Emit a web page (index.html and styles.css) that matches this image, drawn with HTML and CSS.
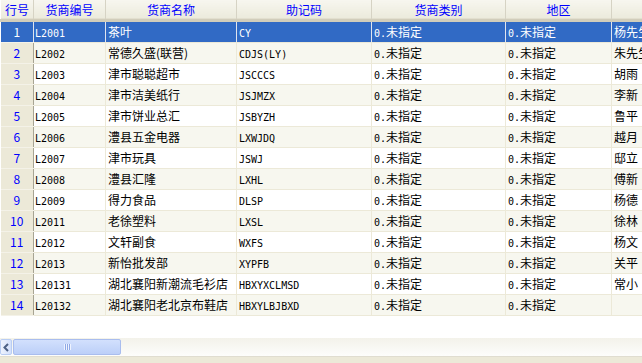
FILE: index.html
```html
<!DOCTYPE html>
<html>
<head>
<meta charset="utf-8">
<link rel="stylesheet" href="styles.css">
</head>
<body>
<div class="app">
  <div class="grid-wrap">
    <table class="grid">
      <colgroup>
        <col class="c-no"><col class="c-code"><col class="c-name"><col class="c-mn"><col class="c-cat"><col class="c-reg"><col class="c-last">
      </colgroup>
      <thead>
        <tr><th>行号</th><th>货商编号</th><th>货商名称</th><th>助记码</th><th>货商类别</th><th>地区</th><th>联系人</th></tr>
      </thead>
      <tbody>
        <tr class="sel"><td class="no">1</td><td class="code"><span class="m">L2001</span></td><td>茶叶</td><td><span class="m">CY</span></td><td><span class="m">0.</span>未指定</td><td><span class="m">0.</span>未指定</td><td>杨先生</td></tr>
        <tr class="alt"><td class="no">2</td><td class="code"><span class="m">L2002</span></td><td>常德久盛(联营)</td><td><span class="m">CDJS(LY)</span></td><td><span class="m">0.</span>未指定</td><td><span class="m">0.</span>未指定</td><td>朱先生</td></tr>
        <tr><td class="no">3</td><td class="code"><span class="m">L2003</span></td><td>津市聪聪超市</td><td><span class="m">JSCCCS</span></td><td><span class="m">0.</span>未指定</td><td><span class="m">0.</span>未指定</td><td>胡雨</td></tr>
        <tr class="alt"><td class="no">4</td><td class="code"><span class="m">L2004</span></td><td>津市洁美纸行</td><td><span class="m">JSJMZX</span></td><td><span class="m">0.</span>未指定</td><td><span class="m">0.</span>未指定</td><td>李新</td></tr>
        <tr><td class="no">5</td><td class="code"><span class="m">L2005</span></td><td>津市饼业总汇</td><td><span class="m">JSBYZH</span></td><td><span class="m">0.</span>未指定</td><td><span class="m">0.</span>未指定</td><td>鲁平</td></tr>
        <tr class="alt"><td class="no">6</td><td class="code"><span class="m">L2006</span></td><td>澧县五金电器</td><td><span class="m">LXWJDQ</span></td><td><span class="m">0.</span>未指定</td><td><span class="m">0.</span>未指定</td><td>越月</td></tr>
        <tr><td class="no">7</td><td class="code"><span class="m">L2007</span></td><td>津市玩具</td><td><span class="m">JSWJ</span></td><td><span class="m">0.</span>未指定</td><td><span class="m">0.</span>未指定</td><td>邸立</td></tr>
        <tr class="alt"><td class="no">8</td><td class="code"><span class="m">L2008</span></td><td>澧县汇隆</td><td><span class="m">LXHL</span></td><td><span class="m">0.</span>未指定</td><td><span class="m">0.</span>未指定</td><td>傅新</td></tr>
        <tr><td class="no">9</td><td class="code"><span class="m">L2009</span></td><td>得力食品</td><td><span class="m">DLSP</span></td><td><span class="m">0.</span>未指定</td><td><span class="m">0.</span>未指定</td><td>杨德</td></tr>
        <tr class="alt"><td class="no">10</td><td class="code"><span class="m">L2011</span></td><td>老徐塑料</td><td><span class="m">LXSL</span></td><td><span class="m">0.</span>未指定</td><td><span class="m">0.</span>未指定</td><td>徐林</td></tr>
        <tr><td class="no">11</td><td class="code"><span class="m">L2012</span></td><td>文轩副食</td><td><span class="m">WXFS</span></td><td><span class="m">0.</span>未指定</td><td><span class="m">0.</span>未指定</td><td>杨文</td></tr>
        <tr class="alt"><td class="no">12</td><td class="code"><span class="m">L2013</span></td><td>新怡批发部</td><td><span class="m">XYPFB</span></td><td><span class="m">0.</span>未指定</td><td><span class="m">0.</span>未指定</td><td>关平</td></tr>
        <tr><td class="no">13</td><td class="code"><span class="m">L20131</span></td><td>湖北襄阳新潮流毛衫店</td><td><span class="m">HBXYXCLMSD</span></td><td><span class="m">0.</span>未指定</td><td><span class="m">0.</span>未指定</td><td>常小</td></tr>
        <tr class="alt"><td class="no">14</td><td class="code"><span class="m">L20132</span></td><td>湖北襄阳老北京布鞋店</td><td><span class="m">HBXYLBJBXD</span></td><td><span class="m">0.</span>未指定</td><td><span class="m">0.</span>未指定</td><td></td></tr>
      </tbody>
    </table>
  </div>
  <div class="hscroll">
    <div class="sb-btn">
      <svg width="8" height="9" viewBox="0 0 8 9"><path d="M6 1 L2.5 4.5 L6 8" fill="none" stroke="#4d6185" stroke-width="2"/></svg>
    </div>
    <div class="sb-thumb"><span class="grip"></span></div>
    <div class="sb-track"></div>
  </div>
  <div class="status"></div>
</div>
</body>
</html>
```

FILE: styles.css
```css
html, body {
  margin: 0;
  padding: 0;
  background: #ffffff;
}
.app {
  width: 642px;
  height: 363px;
  display: flex;
  flex-direction: column;
  overflow: hidden;
  font-family: "Noto Sans CJK SC", "Liberation Sans", sans-serif;
  font-size: 12px;
}
.grid-wrap {
  flex: 1;
  overflow: hidden;
  background: #ffffff;
}
.grid {
  table-layout: fixed;
  border-collapse: collapse;
  width: 771px;
}
.c-no { width: 33px; }
.c-code { width: 72px; }
.c-name { width: 131px; }
.c-mn { width: 135px; }
.c-cat { width: 134px; }
.c-reg { width: 106px; }
.c-last { width: 160px; }

.grid th {
  height: 19px;
  padding: 0;
  font-weight: normal;
  color: #0000ff;
  text-align: center;
  white-space: nowrap;
  overflow: hidden;
  line-height: 19px;
  background: linear-gradient(#f7f6ef, #ebeadb);
  border-left: 1px solid #ffffff;
  border-right: 1px solid #d6d3c4;
  border-bottom: 3px solid #d1cdbb;
  box-shadow: inset 0 -1px 0 #e2dfcf;
}
.grid td {
  height: 20px;
  padding: 0 0 0 2px;
  line-height: 20px;
  white-space: nowrap;
  overflow: hidden;
  color: #000000;
  border-right: 1px solid #ece9d8;
  border-bottom: 1px solid #ece9d8;
  background: #ffffff;
}
.grid tr.alt td {
  background: #f7f7ef;
}
.grid td.no {
  padding: 0;
  text-align: center;
  color: #0000ff;
  background: #ece9d8;
  border-right: 1px solid #a7a493;
  border-bottom: 1px solid #f4f2e8;
}
.grid tr.alt td.no {
  background: #ece9d8;
}
.grid td.code {
  padding-left: 1px;
}
.grid tr.sel td,
.grid tr.sel td.no {
  background: #316ac5;
  color: #ffffff;
  border-right-color: #dfe4ee;
}
.m {
  font-family: "DejaVu Sans Mono", "Liberation Mono", monospace;
  font-size: 10px;
  line-height: 1;
}

.hscroll {
  height: 18px;
  display: flex;
  align-items: stretch;
  background: linear-gradient(#f3f2ea, #fdfdfb);
  box-sizing: border-box;
  padding: 1px 0;
}
.sb-btn {
  width: 12px;
  box-sizing: border-box;
  border: 1px solid #b9cdf3;
  border-radius: 2px;
  background: linear-gradient(90deg, #eef3fd, #d3e0fb);
  display: flex;
  align-items: center;
  justify-content: center;
}
.sb-thumb {
  width: 108px;
  margin-left: 1px;
  box-sizing: border-box;
  border: 1px solid #a9bdee;
  border-radius: 2px;
  background: linear-gradient(#d2e0fd, #bccff8);
  display: flex;
  align-items: center;
  justify-content: center;
}
.grip {
  width: 7px;
  height: 6px;
  background: repeating-linear-gradient(90deg, #eef3ff 0 1px, #8fa9e6 1px 2px);
}
.sb-track {
  flex: 1;
}
.status {
  height: 6px;
  background: #ece9d8;
  border-top: 1px solid #e0ddd0;
}
```
